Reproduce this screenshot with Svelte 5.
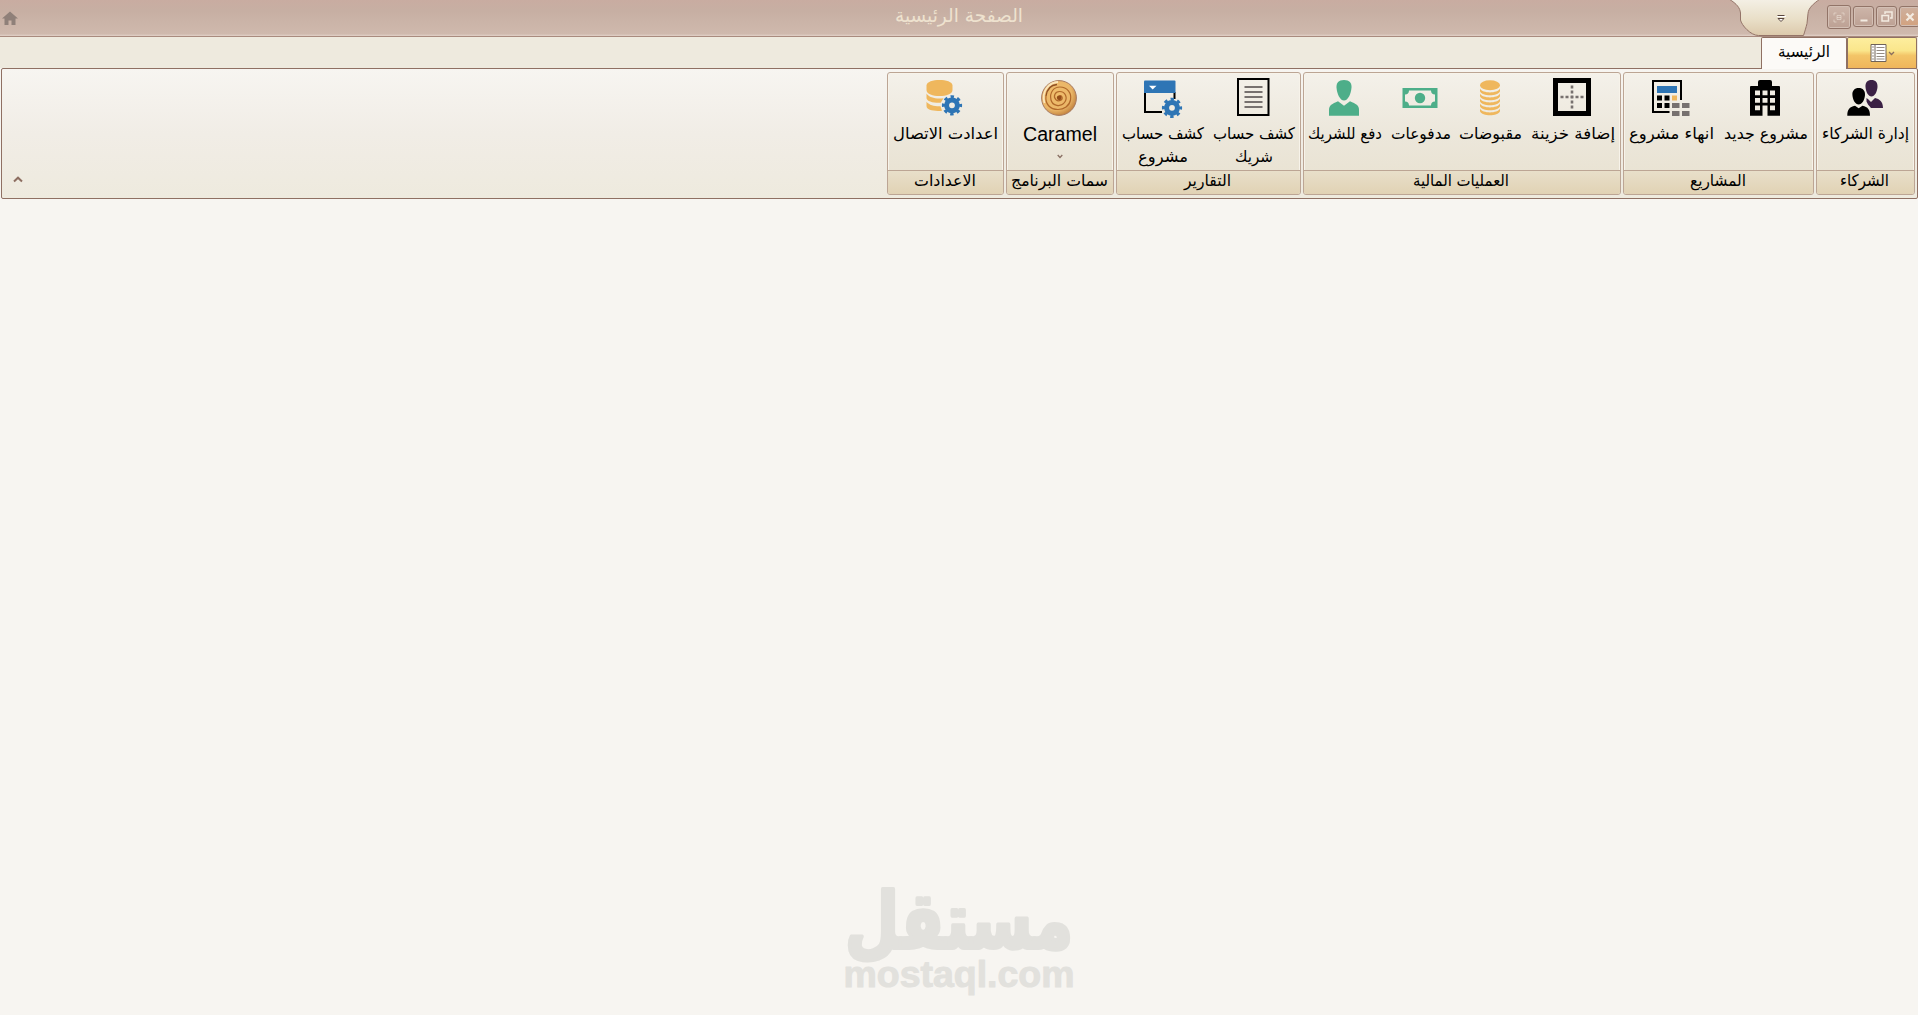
<script lang="ts">
    type Line = { text: string; width: number }
    type Item = { icon: string; width: number; lines: Line[]; menu?: boolean }
    type Group = { title: string; titleWidth: number; width: number; items: Item[] }

    const groups: Group[] = [
        {
            title: 'الشركاء',
            titleWidth: 49,
            width: 99,
            items: [{ icon: 'partners', width: 97, lines: [{ text: 'إدارة الشركاء', width: 87 }] }],
        },
        {
            title: 'المشاريع',
            titleWidth: 56,
            width: 191,
            items: [
                { icon: 'building', width: 95, lines: [{ text: 'مشروع جديد', width: 84 }] },
                { icon: 'calculator', width: 94, lines: [{ text: 'انهاء مشروع', width: 85 }] },
            ],
        },
        {
            title: 'العمليات المالية',
            titleWidth: 96,
            width: 318,
            items: [
                { icon: 'safe', width: 94, lines: [{ text: 'إضافة خزينة', width: 84 }] },
                { icon: 'coins', width: 71, lines: [{ text: 'مقبوضات', width: 63 }] },
                { icon: 'banknote', width: 69, lines: [{ text: 'مدفوعات', width: 60 }] },
                { icon: 'person', width: 82, lines: [{ text: 'دفع للشريك', width: 74 }] },
            ],
        },
        {
            title: 'التقارير',
            titleWidth: 47,
            width: 185,
            items: [
                {
                    icon: 'report',
                    width: 92,
                    lines: [
                        { text: 'كشف حساب', width: 82 },
                        { text: 'شريك', width: 38 },
                    ],
                },
                {
                    icon: 'window',
                    width: 91,
                    lines: [
                        { text: 'كشف حساب', width: 82 },
                        { text: 'مشروع', width: 50 },
                    ],
                },
            ],
        },
        {
            title: 'سمات البرنامج',
            titleWidth: 97,
            width: 108,
            items: [
                {
                    icon: 'caramel',
                    width: 106,
                    lines: [{ text: 'Caramel', width: 74 }],
                    menu: true,
                },
            ],
        },
        {
            title: 'الاعدادات',
            titleWidth: 62,
            width: 117,
            items: [
                { icon: 'database', width: 115, lines: [{ text: 'اعدادت الاتصال', width: 105 }] },
            ],
        },
    ]
</script>

{#snippet fitted(text: string, width: number, height: number, baseline: number)}
    <svg class="fitted" {width} {height}>
        <text
            x={width / 2}
            y={baseline}
            text-anchor="middle"
            textLength={width}
            lengthAdjust="spacingAndGlyphs">{text}</text
        >
    </svg>
{/snippet}

{#snippet gear(x: number, y: number)}
    <g transform="translate({x} {y})" fill="none" stroke="#2e75b5">
        <circle r="5.4" stroke-width="5" />
        <circle r="8.4" stroke-width="3.4" stroke-dasharray="3.3 3.3" stroke-dashoffset="1.65" />
    </g>
{/snippet}

{#snippet icon(name: string)}
    <svg class="icon" width="38" height="38" viewBox="0 0 38 38">
        {#if name === 'partners'}
            <g fill="#3b2145">
                <path d="M25.5 2c4 0 6.3 2.500 6 7-.3 5-3 9.500-6 9.500s-5.700-4.500-6-9.500c-.3-4.500 2-7 6-7z" />
                <path d="M20.500 20l2 1.500 2.500 2.500 4-4c4.500 1 8 3.500 8 10H25l-3-3.500-1.500-3z" />
            </g>
            <path d="M12.700 10c4.200 0 6.600 2.700 6.300 7-.3 5-3 9.500-6.300 9.500S6.700 22 6.400 17c-.3-4.300 2.100-7 6.300-7z" />
            <path d="M1.300 37.700c0-6 2-8.700 7.700-9.900l3.700 2.500 3.700-2.500c5.700 1.200 7.600 3.900 7.600 9.900z" />
        {:else if name === 'building'}
            <path
                fill-rule="evenodd"
                d="M4 9q0-1 1-1h7V4q0-2 2-2h10q2 0 2 2v4h7q1 0 1 1v28.700H21.500V27.500h-5v10.200H4zM9 12.500v4.700h5v-4.700zM16.500 12.500v4.700h5v-4.700zM24 12.500v4.700h5v-4.700zM9 20v4.700h5V20zM16.500 20v4.700h5V20zM24 20v4.700h5V20zM9 27.500v4.700h5v-4.700zM24 27.500v4.700h5v-4.700z"
            />
        {:else if name === 'calculator'}
            <path d="M30 22V3H2v31h16.500" fill="none" stroke="#000" stroke-width="2" />
            <path d="M6 8h20v7H6z" fill="#2e75b5" />
            <path d="M6 17.500h5v5H6zM13.500 17.500h5v5h-5zM6 25h5v5H6zM13.500 25h5v5h-5z" />
            <path d="M21 17.500h5v5h-5z" fill="#efb75d" />
            <path d="M21 25h7.500v5H21zM31 25h7.500v5H31zM21 33h7.500v5H21zM31 33h7.500v5H31z" fill="#77716f" />
        {:else if name === 'safe'}
            <path d="M2.500 2.500h33v33h-33z" fill="none" stroke="#000" stroke-width="5" />
            <path d="M7.500 19h23M19 7.500v23" fill="none" stroke="#77716f" stroke-width="2.600" stroke-dasharray="3 2" />
        {:else if name === 'coins'}
            <ellipse cx="19" cy="7.300" rx="10" ry="5" fill="#efb75d" />
            <g fill="#efb75d">
                {#each [0, 5, 10, 15, 20] as y}
                    <path transform="translate(0 {y})" d="M9 10.500c2.500 5.200 17.500 5.200 20 0v2.700c-2 5.300-18 5.300-20 0z" />
                {/each}
            </g>
        {:else if name === 'banknote'}
            <path
                fill="#4dae89"
                fill-rule="evenodd"
                d="M1.500 10h35v20h-35zM8 12.500c0 2.500-1.500 4-4 4v7c2.500 0 4 1.500 4 4h22c0-2.500 1.500-4 4-4v-7c-2.500 0-4-1.500-4-4z"
            />
            <circle cx="19" cy="20" r="5.200" fill="#4dae89" />
        {:else if name === 'person'}
            <g fill="#4dae89">
                <path d="M19 2c5.500 0 7.800 3 7.500 7.500C26 16 23 22.500 19 22.500S12 16 11.500 9.500C11.200 5 13.500 2 19 2z" />
                <path d="M4 37.700v-6c0-4 3-6 9-8.400l6 4.500 6-4.500c6 2.400 9 4.400 9 8.400v6z" />
            </g>
        {:else if name === 'report'}
            <path d="M4 1h30.500v36H4z" fill="none" stroke="#000" stroke-width="2" />
            <path d="M10.500 9h18M10.500 14h18M10.500 19h18M10.500 24h18M10.500 29h18" stroke="#77716f" stroke-width="2.200" />
        {:else if name === 'window'}
            <path d="M2 14v20h17M31.500 14v7" fill="none" stroke="#000" stroke-width="2" />
            <path d="M2 2.500h29.500q1 0 1 1V15H1V3.500q0-1 1-1z" fill="#2e75b5" />
            <path d="M6 7.700h7.500L9.700 11.500z" fill="#fff" />
            {@render gear(29, 29.800)}
        {:else if name === 'caramel'}
            <defs>
                <radialGradient id="caramel" cx=".4" cy=".38" r=".66">
                    <stop offset="0" stop-color="#f0bd6c" />
                    <stop offset=".7" stop-color="#eab668" />
                    <stop offset="1" stop-color="#c07f3c" />
                </radialGradient>
            </defs>
            <circle cx="19" cy="20" r="17.400" fill="url(#caramel)" stroke="#a67a62" />
            <path d="M4.500 25C1 13 9 4.500 18 4" fill="none" stroke="#fbe6bb" stroke-width="1.800" />
            <path
                d="M19 20c-1.500-2 2-3.500 3-1 1.200 3.200-3.500 5-6 2.700-3.300-3.200-1-8.200 3.500-8.200 6 0 8.500 6.500 5 11-4 5-12 3.500-13.500-2.500C9.200 14 14 9 20 9c7 0 12 6 10.500 13-1.200 6-6.500 9.500-12.500 9.500C10 31.500 5 26 6 18"
                fill="none"
                stroke="#b0682a"
                stroke-width="1.200"
            />
            <path d="M6 18C7 11 11.500 7 17 6.500" fill="none" stroke="#8f4f24" stroke-width="1.300" />
            <circle cx="19.200" cy="19.800" r="2.400" fill="#944d19" />
        {:else if name === 'database'}
            <g fill="#efb75d">
                <path d="M.5 7.500C.5 .2 26.500 .2 26.500 7.500V12c0 8-26 8-26 0z" />
                <path d="M.5 15.500c3 4.500 10 5.600 17 4.700l-2.800 4.600C8 25.200 .5 23.500 .5 20z" />
                <path d="M.5 23.700c3 3.600 8 4.700 14 4.500l1.500 4.500C8 33.500 .5 32 .5 28z" />
            </g>
            {@render gear(26, 27.300)}
        {/if}
    </svg>
{/snippet}

<div class="app" dir="rtl">
    <header class="titlebar">
        <div class="controls">
            <span class="control close">
                <svg width="10" height="10" viewBox="0 0 10 10"><path d="M1.500 1.500l7 7M8.500 1.500l-7 7" stroke-width="2.200" /></svg>
            </span>
            <span class="control">
                <svg width="12" height="11" viewBox="0 0 12 11">
                    <path d="M4 3V1h7v6H9M1 4.500h6.500V10H1z" stroke-width="1.500" />
                </svg>
            </span>
            <span class="control">
                <svg width="12" height="11" viewBox="0 0 12 11"><path d="M2.500 9.500h7" stroke-width="2" /></svg>
            </span>
            <span class="control wide">
                <svg width="12" height="11" viewBox="0 0 12 11">
                    <path d="M1 3.500V1h2.500M8.500 1H11v2.500M11 7.500V10H8.500M3.500 10H1V7.500M4 3.500h4v4H4zM4 5.500h4" opacity=".5" />
                </svg>
            </span>
            <svg class="quick" width="92" height="36" viewBox="0 0 92 36">
                <defs>
                    <linearGradient id="quick" x2="0" y2="1">
                        <stop offset="0" stop-color="#f4f0e6" />
                        <stop offset=".55" stop-color="#e9dfc8" />
                        <stop offset="1" stop-color="#dcc9ab" />
                    </linearGradient>
                </defs>
                <path
                    d="M0-1C8 4 11 8 11.500 13v7c1 5 10 15.500 18 15.500h45c1-3 2.500-8 3.500-12l1-10C79.500 8 84 4 91-1"
                    fill="url(#quick)"
                    stroke="#947468"
                />
                <path d="M48 16.500h9" stroke="#fff" />
                <path d="M48.500 15.500h7" stroke="#57443d" />
                <path d="M49 18.500h6L52 21.500z" fill="#fff" stroke="#57443d" />
            </svg>
        </div>
        <div class="title">{@render fitted('الصفحة الرئيسية', 128, 32, 22)}</div>
        <svg class="home" width="18" height="16" viewBox="0 0 18 16">
            <path d="M1 8.500L9 1.500l8 7h-2.500v6.500h-4v-4.500h-3V15h-4V8.500z" fill="#8f8079" />
        </svg>
    </header>

    <nav class="tabs">
        <button class="file" aria-label="file">
            <svg width="26" height="20" viewBox="0 0 26 20">
                <path d="M1 1.500h15v17H1z" fill="#fff" stroke="#6e6259" />
                <path d="M5 1.500v17" stroke="#6e6259" />
                <path d="M2 4h2M2 7h2M2 10h2M2 13h2M2 16h2" stroke="#9a9188" />
                <path d="M6.500 4.500h8M6.500 7.500h8M6.500 10.500h8M6.500 13.500h8M6.500 16h8" stroke="#958c84" />
                <path d="M19 9l2.500 2.500L24 9" fill="none" stroke="#8a6f5e" stroke-width="1.300" />
            </svg>
        </button>
        <button class="tab">{@render fitted('الرئيسية', 52, 30, 19)}</button>
    </nav>

    <section class="ribbon">
        {#each groups as group}
            <div class="group" style:width="{group.width}px">
                <div class="items">
                    {#each group.items as item}
                        <div class="item" style:width="{item.width}px">
                            {@render icon(item.icon)}
                            <div class={['lines', item.menu && 'latin']}>
                                {#each item.lines as line}
                                    {@render fitted(line.text, line.width, 23, 17)}
                                {/each}
                            </div>
                            {#if item.menu}
                                <svg class="arrow" width="6" height="5" viewBox="0 0 6 5">
                                    <path d="M.7 1L3 3.500 5.300 1" fill="none" stroke="#8a7064" stroke-width="1.300" />
                                </svg>
                            {/if}
                        </div>
                    {/each}
                </div>
                <div class="caption">{@render fitted(group.title, group.titleWidth, 23, 15)}</div>
            </div>
        {/each}
        <svg class="collapse" width="10" height="7" viewBox="0 0 10 7">
            <path d="M1 5.500L5 1.700 9 5.500" fill="none" stroke="#8d6e61" stroke-width="2" />
        </svg>
    </section>

    <main class="workspace">
        <svg class="watermark" width="232" height="116" viewBox="0 0 232 116">
            <text
                class="mark"
                x="116"
                y="59"
                text-anchor="middle"
                textLength="228"
                lengthAdjust="spacingAndGlyphs">مستقل</text
            >
            <text
                class="domain"
                x="116"
                y="98"
                text-anchor="middle"
                textLength="231"
                lengthAdjust="spacingAndGlyphs"
                direction="ltr">mostaql.com</text
            >
        </svg>
    </main>
</div>

<style>
    :global(body) {
        margin: 0;
        background: #f7f5f1;
    }

    .app {
        display: flex;
        flex-direction: column;
        height: 1015px;
        overflow: hidden;
        font-family: 'DejaVu Sans', sans-serif;
        font-size: 16px;
        color: #000;
    }

    .fitted {
        display: block;
        overflow: visible;
        flex-shrink: 0;
    }

    .titlebar {
        box-sizing: border-box;
        display: grid;
        grid-template-columns: 1fr auto 1fr;
        height: 37px;
        border-bottom: 1px solid #a98b7e;
        background: linear-gradient(#c9aca1, #c7afa3 30%, #cfb9ad 94%, #e2d2c8);
    }

    .title {
        font-size: 19px;
    }

    .title .fitted {
        fill: #eee2cf;
    }

    .controls {
        display: flex;
        gap: 2px;
        padding-top: 6px;
    }

    .control {
        box-sizing: border-box;
        display: flex;
        flex-shrink: 0;
        align-items: center;
        justify-content: center;
        width: 21px;
        height: 21px;
        border: 1px solid #927468;
        border-radius: 3px;
        background: linear-gradient(#cdb5a9, #bda194);
        box-shadow: inset 0 0 0 1px #d3bfb4;
    }

    .control.close {
        margin-right: -2px;
        background: linear-gradient(#cdb09f, #d3a27f);
    }

    .control.wide {
        width: 24px;
        height: 24px;
        margin-top: -1px;
    }

    .control path {
        fill: none;
        stroke: #f3ebe1;
    }

    .quick {
        margin: -6px 4px 0 0;
    }

    .home {
        margin: 10px auto 0 1px;
    }

    .tabs {
        box-sizing: border-box;
        display: flex;
        height: 31px;
        background: #eeeade;
    }

    .file,
    .tab {
        box-sizing: border-box;
        display: flex;
        justify-content: center;
        padding: 0;
        border: 1px solid #8f7063;
        border-bottom: 0;
        border-radius: 2px 2px 0 0;
        font: inherit;
    }

    .file {
        align-items: center;
        width: 70px;
        margin-right: 1px;
        background: linear-gradient(#fdee9e, #fae68b 42%, #f3c568 58%, #efb55b);
    }

    .file svg {
        direction: ltr;
        margin-left: 2px;
    }

    .tab {
        position: relative;
        width: 86px;
        height: 32px;
        background: #fcfaf7;
    }

    .ribbon {
        box-sizing: border-box;
        display: flex;
        gap: 2px;
        height: 131px;
        margin: 0 0 0 1px;
        padding: 3px 2px;
        border: 1px solid #8f7063;
        border-radius: 2px;
        background: linear-gradient(#f7f5f1, #f1ede6 50%, #eeeade);
    }

    .group {
        box-sizing: border-box;
        display: flex;
        flex-direction: column;
        height: 123px;
        border: 1px solid #bca594;
        border-radius: 3px;
        background: linear-gradient(#f4f1ea, #ece7db 50%, #e8e1cf);
        box-shadow: inset 0 0 0 1px #f7f3ea;
    }

    .items {
        display: flex;
        height: 97px;
    }

    .item {
        display: flex;
        flex-direction: column;
        align-items: center;
        padding-top: 5px;
    }

    .icon {
        flex-shrink: 0;
        margin-right: 2px;
        overflow: visible;
    }

    .lines {
        display: flex;
        flex-direction: column;
        align-items: center;
        padding-top: 6px;
    }

    .latin {
        padding-top: 8px;
        font-family: 'Liberation Sans', sans-serif;
        font-size: 19.5px;
    }

    .arrow {
        margin: 7px 1px 0 0;
    }

    .caption {
        display: flex;
        flex: 1;
        justify-content: center;
        padding-right: 2px;
        border-top: 1px solid #bca594;
        background: linear-gradient(#e8dfca, #e1d2b4);
        border-radius: 0 0 2px 2px;
    }

    .collapse {
        align-self: flex-end;
        margin: 0 auto 12px 9px;
    }

    .workspace {
        display: flex;
        flex: 1;
        align-items: flex-end;
        justify-content: center;
        background: #f7f5f1;
    }

    .watermark {
        margin-bottom: 10px;
        overflow: visible;
        fill: #e2e1dd;
        stroke: #e2e1dd;
        stroke-linejoin: round;
    }

    .mark {
        font-size: 78px;
        font-weight: bold;
        stroke-width: 4px;
    }

    .domain {
        font-family: 'Liberation Sans', sans-serif;
        font-size: 37px;
        font-weight: bold;
        stroke-width: 1px;
    }
</style>
